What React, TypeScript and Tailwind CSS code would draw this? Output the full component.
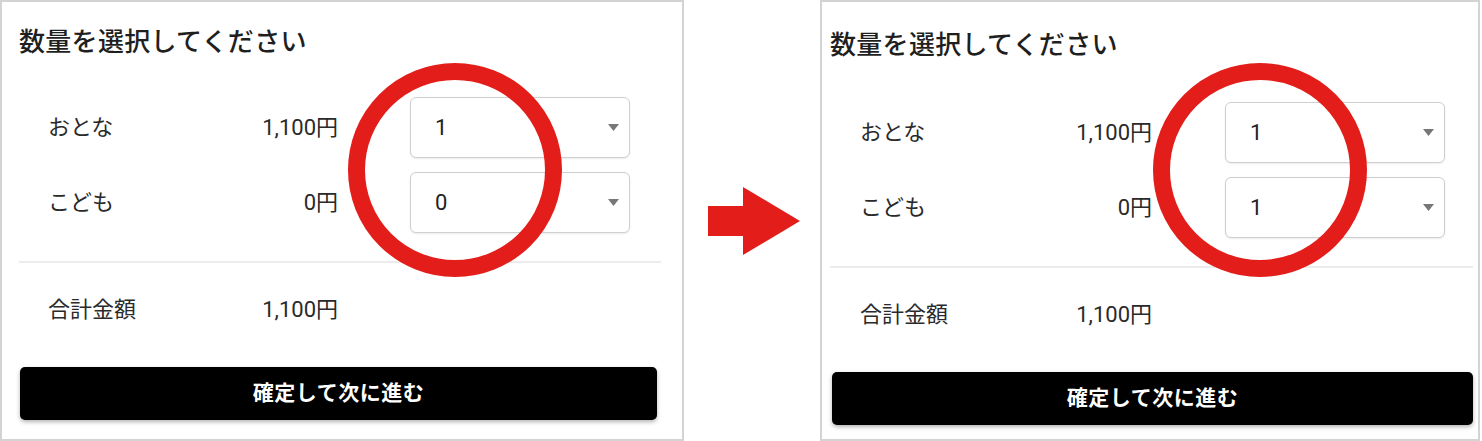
const font = { fontFamily: 'Roboto, "Noto Sans CJK JP", "Noto Sans", sans-serif' };

type PanelProps = {
  kids: number;
  wide: boolean;
};

function Caret() {
  return (
    <svg width="11" height="7" viewBox="0 0 11 7" className="shrink-0">
      <path d="M0 0 H11 L5.5 7 Z" fill="#777" />
    </svg>
  );
}

function QtySelect({ value }: { value: number }) {
  return (
    <div className="flex h-[61px] w-[220px] items-center justify-between rounded-[6px] border-[1.5px] border-[#cfcfcf] bg-white pl-[24px] pr-[10px] shadow-[0_1px_2px_rgba(0,0,0,0.08)]">
      <span className="text-[22px] text-[#222]">{value}</span>
      <Caret />
    </div>
  );
}

function Ring({ wide }: { wide: boolean }) {
  return (
    <div
      className={`pointer-events-none absolute top-[61px] h-[214px] w-[214px] rounded-full border-[17px] border-[#e31e1a] ${
        wide ? "left-[346px]" : "left-[331px]"
      }`}
    />
  );
}

function Panel({ kids, wide }: PanelProps) {
  const rows = [
    { label: "おとな", price: "1,100円", qty: 1 },
    { label: "こども", price: "0円", qty: kids },
  ];
  const labelCls = wide ? "w-[171px] pl-[29px]" : "w-[170px] pl-[30px]";
  const priceCls = wide ? "w-[148px]" : "w-[152px]";

  return (
    <div
      className={`relative h-[441px] shrink-0 border-2 border-[#d3d3d3] bg-white text-[#2a2a2a] ${
        wide ? "w-[684px]" : "w-[660px]"
      }`}
    >
      <div className={wide ? "pl-[17px] pr-[21px] pt-[25px]" : "pl-[8px] pr-[5px] pt-[28px]"}>
        <h2 className="text-[26px] font-medium leading-[30px] tracking-[0.3px] text-[#1f1f1f]">数量を選択してください</h2>

        <div className={`flex flex-col gap-[14px] ${wide ? "mt-[40px]" : "mt-[42px]"}`}>
          {rows.map((r) => (
            <div key={r.label} className="flex h-[61px] items-center">
              <span className={`text-[22px] ${labelCls}`}>{r.label}</span>
              <span className={`text-right text-[22px] ${priceCls}`}>{r.price}</span>
              <div className={wide ? "ml-[72px]" : "ml-[73px]"}>
                <QtySelect value={r.qty} />
              </div>
            </div>
          ))}
        </div>

        <div className="mt-[28px] h-[2px] bg-[#ececec]" />

        <div className="mt-[26px] flex h-[40px] items-center">
          <span className={`text-[22px] ${labelCls}`}>合計金額</span>
          <span className={`text-right text-[22px] ${priceCls}`}>1,100円</span>
        </div>

        <button
          type="button"
          className={`mt-[38px] flex h-[53px] items-center justify-center rounded-[5px] bg-black text-[21px] font-bold tracking-[0.5px] text-white shadow-[0_2px_4px_rgba(0,0,0,0.3)] ${
            wide ? "ml-[1px] w-[637px]" : "ml-[2px] w-[641px]"
          }`}
        >
          確定して次に進む
        </button>
      </div>
      <Ring wide={wide} />
    </div>
  );
}

export default function App() {
  return (
    <div className="flex h-[441px] w-[1482px] bg-white" style={font}>
      <Panel kids={0} wide />
      <div className="flex w-[136px] shrink-0 items-center pl-[24px]">
        <svg width="92" height="68" viewBox="0 0 92 68">
          <path d="M0 19 H35 V0 L92 34 L35 68 V49 H0 Z" fill="#e31e1a" />
        </svg>
      </div>
      <Panel kids={1} wide={false} />
    </div>
  );
}
